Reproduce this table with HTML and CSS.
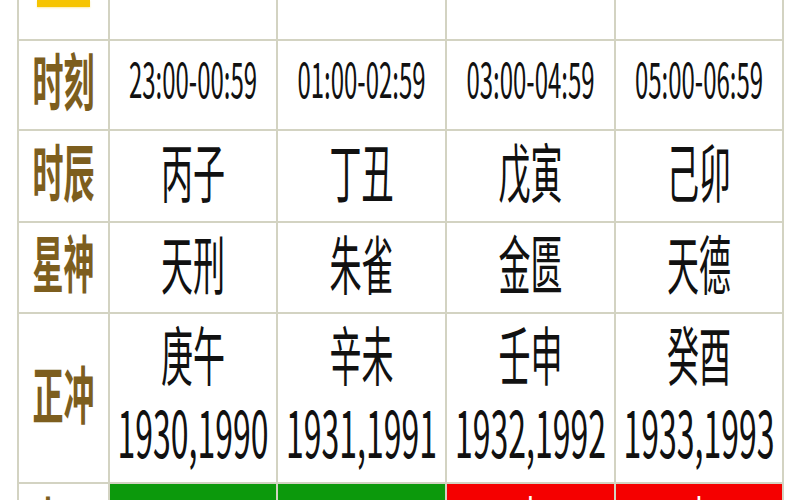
FILE: index.html
```html
<!DOCTYPE html>
<html lang="zh">
<head>
<meta charset="utf-8">
<title>时辰吉凶</title>
<link rel="stylesheet" href="styles.css">
</head>
<body>
<div class="table">
  <div class="cell top head-top"><div class="badge"></div></div>
  <div class="cell top"></div>
  <div class="cell top"></div>
  <div class="cell top"></div>
  <div class="cell top"></div>

  <div class="cell"><span class="t head">时刻</span></div>
  <div class="cell"><span class="t time">23:00-00:59</span></div>
  <div class="cell"><span class="t time">01:00-02:59</span></div>
  <div class="cell"><span class="t time">03:00-04:59</span></div>
  <div class="cell"><span class="t time">05:00-06:59</span></div>

  <div class="cell"><span class="t head">时辰</span></div>
  <div class="cell"><span class="t val">丙子</span></div>
  <div class="cell"><span class="t val">丁丑</span></div>
  <div class="cell"><span class="t val">戊寅</span></div>
  <div class="cell"><span class="t val">己卯</span></div>

  <div class="cell"><span class="t head">星神</span></div>
  <div class="cell"><span class="t val">天刑</span></div>
  <div class="cell"><span class="t val">朱雀</span></div>
  <div class="cell"><span class="t val">金匮</span></div>
  <div class="cell"><span class="t val">天德</span></div>

  <div class="cell"><span class="t head">正冲</span></div>
  <div class="cell two"><span class="t val">庚午</span><span class="t year">1930,1990</span></div>
  <div class="cell two"><span class="t val">辛未</span><span class="t year">1931,1991</span></div>
  <div class="cell two"><span class="t val">壬申</span><span class="t year">1932,1992</span></div>
  <div class="cell two"><span class="t val">癸酉</span><span class="t year">1933,1993</span></div>

  <div class="cell last"><span class="t head">吉凶</span></div>
  <div class="cell last bad"><span class="t val">凶</span></div>
  <div class="cell last bad"><span class="t val">凶</span></div>
  <div class="cell last good"><span class="t val">吉</span></div>
  <div class="cell last good"><span class="t val">吉</span></div>
</div>
</body>
</html>
```
FILE: styles.css
```css
html, body {
  margin: 0;
  padding: 0;
  height: 500px;
  overflow: hidden;
  background: #ffffff;
}

body {
  font-family: "Noto Sans CJK SC", "Noto Sans", sans-serif;
}

.table {
  display: grid;
  grid-template-columns: 89px 166px 167px 167px 166px;
  grid-template-rows: 39px 88px 90px 89px 168px 76px;
  gap: 2px;
  padding: 0 2px 2px;
  margin-left: 17px;
  width: fit-content;
  background: #d3d3c2;
}

.cell {
  background: #ffffff;
  display: flex;
  flex-direction: column;
  align-items: center;
  justify-content: center;
}

.head-top {
  justify-content: flex-start;
}

.badge {
  width: 53px;
  height: 7px;
  background: #f6c400;
  box-shadow: 0 1px 2px rgba(246, 196, 0, 0.35);
}

.t {
  display: inline-block;
  line-height: 1;
  transform: translateY(-7px) scaleY(2);
  color: #111111;
  font-weight: 400;
  white-space: nowrap;
}

.last .t {
  transform: translateY(0) scaleY(2);
}

.head {
  font-size: 31px;
  font-weight: 700;
  color: #7d5e1e;
}

.time {
  font-size: 24px;
}

.val {
  font-size: 32px;
}

.year {
  font-size: 32px;
}

.two {
  gap: 46px;
}

.bad {
  background: #0c990c;
}

.good {
  background: #f50000;
}

.bad .t,
.good .t {
  color: #ffffff;
}
```
